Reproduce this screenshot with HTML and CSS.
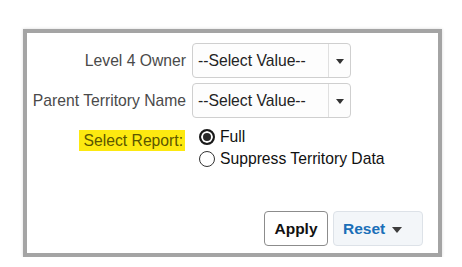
FILE: index.html
```html
<!DOCTYPE html>
<html>
<head>
<meta charset="utf-8">
<link rel="stylesheet" href="styles.css">
</head>
<body>
<div class="frame">
  <div class="form">
    <label class="label">Level 4 Owner</label>
    <div class="select"><span class="value">--Select Value--</span><span class="arrow-box"><span class="arrow"></span></span></div>
    <label class="label">Parent Territory Name</label>
    <div class="select"><span class="value">--Select Value--</span><span class="arrow-box"><span class="arrow"></span></span></div>
    <div class="label report-label"><span class="highlight">Select Report:</span></div>
    <div class="radios">
      <div class="radio-row"><span class="radio checked"></span><span class="radio-text">Full</span></div>
      <div class="radio-row"><span class="radio"></span><span class="radio-text">Suppress Territory Data</span></div>
    </div>
  </div>
  <div class="actions">
    <button class="btn apply">Apply</button>
    <button class="btn reset">Reset<span class="caret"></span></button>
  </div>
</div>
</body>
</html>
```
FILE: styles.css
```css
html, body {
  margin: 0;
  padding: 0;
  background: #ffffff;
}
body {
  font-family: "Liberation Sans", Arial, sans-serif;
  font-size: 15.7px;
}
.frame {
  box-sizing: border-box;
  margin: 29px 0 0 23px;
  width: 419px;
  height: 228px;
  border: 4px solid #a4a4a4;
  box-shadow: 0 0 3px rgba(0, 0, 0, 0.15);
  display: flex;
  flex-direction: column;
  padding: 10px 0 0 0;
}
.form {
  display: grid;
  grid-template-columns: 159px 1fr;
  column-gap: 6px;
  row-gap: 5px;
  align-items: center;
}
.label {
  text-align: right;
  color: #4a4a4a;
  white-space: nowrap;
}
.select {
  box-sizing: border-box;
  width: 159px;
  height: 35px;
  border: 1px solid #cfcfcf;
  border-radius: 4px;
  background: #fdfdfd;
  display: flex;
  align-items: stretch;
}
.value {
  flex: 1;
  display: flex;
  align-items: center;
  padding-left: 5px;
  color: #222;
  white-space: nowrap;
}
.arrow-box {
  width: 21px;
  border-left: 1px solid #e0e0e0;
  display: flex;
  align-items: center;
  justify-content: center;
  padding-top: 2px;
}
.arrow {
  width: 0;
  height: 0;
  border-left: 4.5px solid transparent;
  border-right: 4.5px solid transparent;
  border-top: 5px solid #333;
}
.report-label {
  align-self: start;
  margin-top: 9px;
}
.highlight {
  background: #fde910;
  color: #5b5600;
  padding: 2px 2px 2px 5px;
  margin-right: 1px;
}
.radios {
  margin-top: 6px;
  margin-left: 7px;
  display: flex;
  flex-direction: column;
  gap: 6px;
}
.radio-row {
  display: flex;
  align-items: center;
  height: 16px;
}
.radio {
  box-sizing: border-box;
  width: 16px;
  height: 16px;
  border-radius: 50%;
  border: 1.5px solid #333;
  background: #fff;
  margin-right: 5px;
  flex: none;
}
.radio.checked {
  border: 2px solid #1a1a1a;
  background: #2a2a2a;
  box-shadow: inset 0 0 0 2px #fff;
}
.radio-text {
  color: #111;
  white-space: nowrap;
}
.actions {
  margin-top: auto;
  display: flex;
  justify-content: flex-end;
  gap: 5px;
  padding: 0 15px 7px 0;
}
.btn {
  box-sizing: border-box;
  height: 35px;
  font-family: "Liberation Sans", Arial, sans-serif;
  font-size: 15.5px;
  font-weight: bold;
  border-radius: 4px;
  display: flex;
  align-items: center;
  margin: 0;
}
.apply {
  width: 64px;
  justify-content: center;
  background: #fff;
  border: 1px solid #8c8c8c;
  color: #111;
  padding: 0;
}
.reset {
  width: 90px;
  background: #f3f6f9;
  border: 1px solid #dde2e8;
  color: #1a6fb8;
  padding: 0 0 0 9px;
}
.caret {
  display: inline-block;
  width: 0;
  height: 0;
  margin-left: 7px;
  margin-top: 2px;
  border-left: 5px solid transparent;
  border-right: 5px solid transparent;
  border-top: 6px solid #3d3d3d;
}
```
